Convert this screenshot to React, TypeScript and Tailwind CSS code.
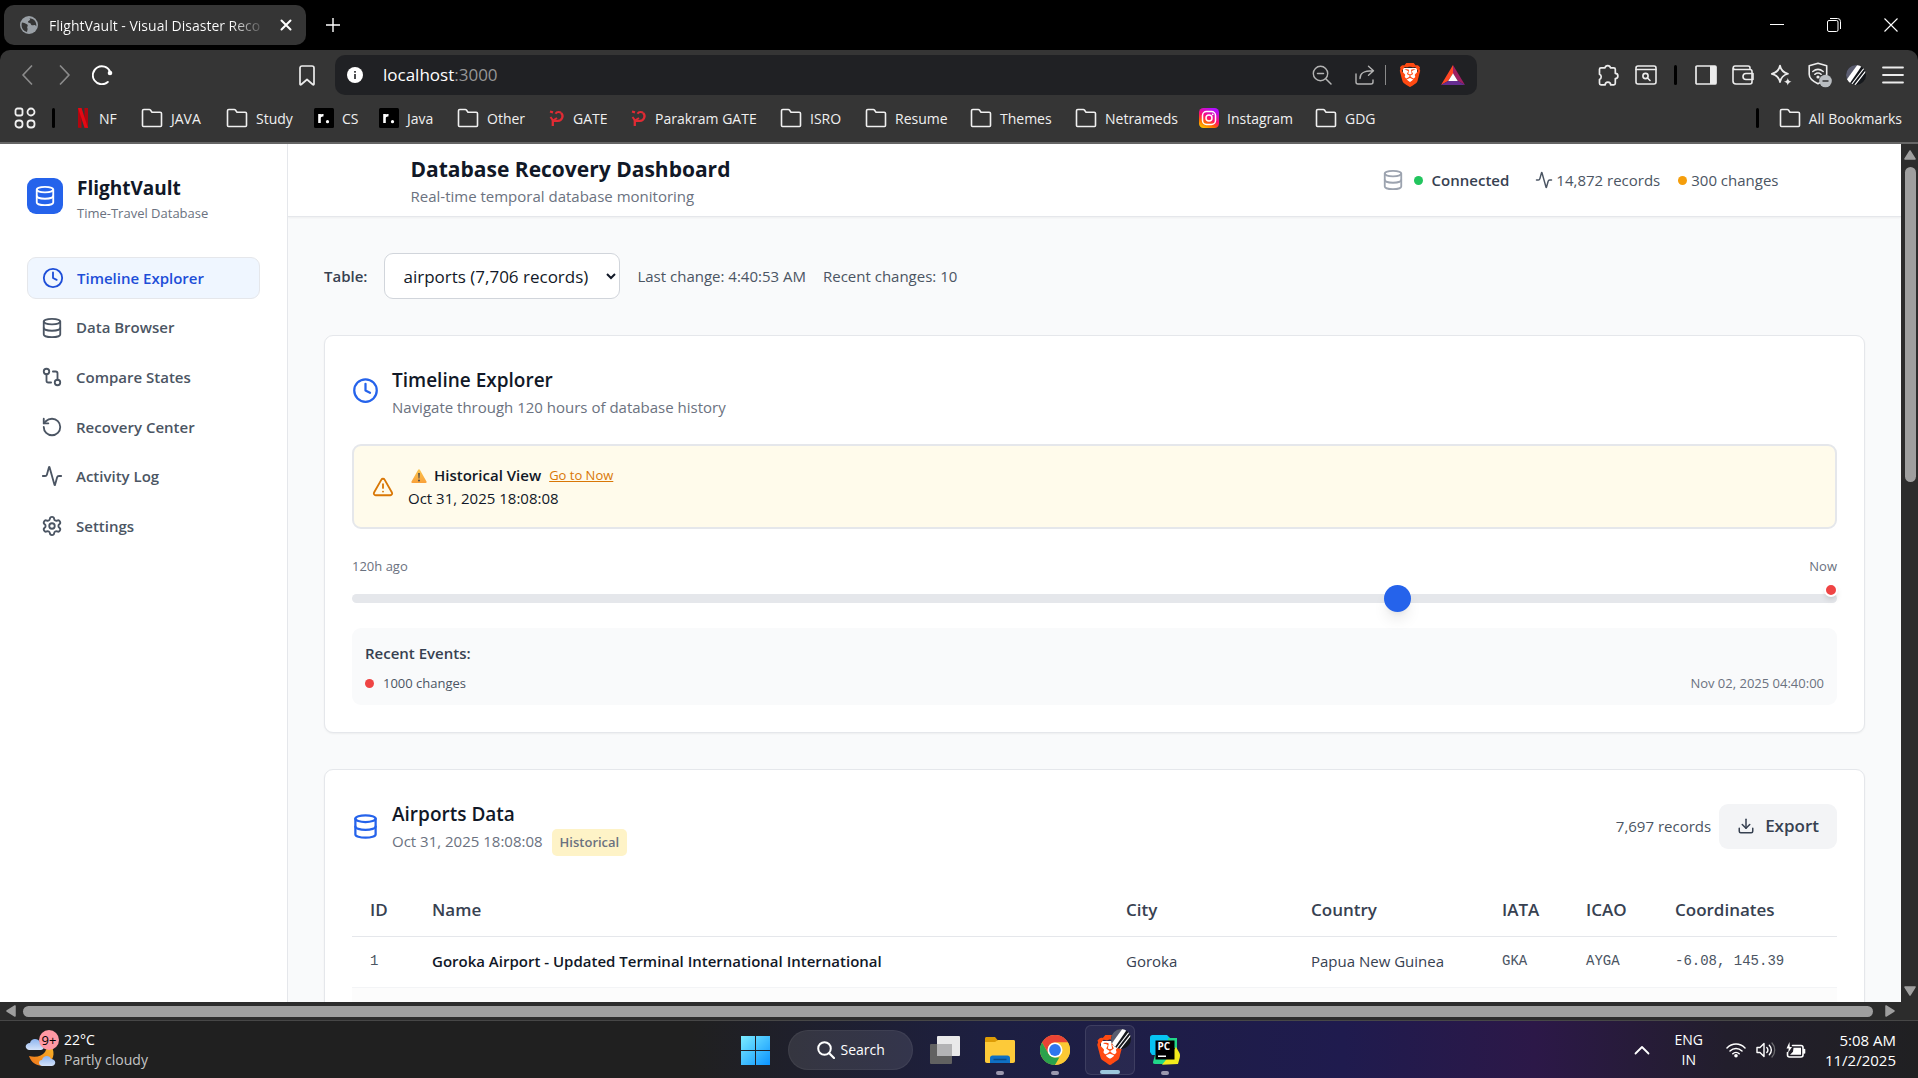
import React from "react";
import {
  Activity,
  Clock,
  Database,
  Download,
  GitCompare,
  RotateCcw,
  Settings,
  TriangleAlert,
} from "lucide-react";
import { SiBrave } from "react-icons/si";

type IconProps = { className?: string };

/* ---------- browser icons ---------- */

const line = {
  fill: "none",
  stroke: "currentColor",
  strokeLinecap: "round" as const,
  strokeLinejoin: "round" as const,
};

function GlobeIcon() {
  return (
    <svg viewBox="0 0 18 18" className="size-[18px] shrink-0">
      <circle cx="9" cy="9" r="9" fill="#9aa0a6" />
      <path
        d="M2 6.500c2 0 3 .8 4.400 1.400 1.400.5 1.700 1.600 1 2.600-.7 1 .3 1.500.2 2.700-.1 1-.6 1.800-.6 2.800C3.600 15.200 1.600 12.400 1.600 9c0-.9.1-1.700.4-2.500zM9 2.200c1 .2 1.400 1 .9 1.800-.6.9-2 .8-1.900 2 .1 1 1.600.7 2.300 1.300.8.6.6 1.900 1.700 2 1.200.2 1.600-.6 2.600-.3.9.3 1.300.9 1.700 1.200.5-3.800-1.800-7.900-7.300-8z"
        fill="#353535"
      />
    </svg>
  );
}

function FolderIcon() {
  return (
    <svg viewBox="0 0 22 20" className="h-5 w-[22px] shrink-0">
      <path
        d="M1.500 17.500V2.800C1.500 2 2 1.500 2.800 1.500h5.400c.5 0 .9.2 1.200.6L11 4.200h8.200c.8 0 1.300.5 1.300 1.300v12c0 .6-.4 1-1 1h-17c-.6 0-1-.4-1-1z"
        {...line}
        strokeWidth="1.600"
      />
    </svg>
  );
}

function NetflixIcon() {
  return (
    <svg viewBox="0 0 14 20" className="h-5 w-3.5 shrink-0">
      <path d="M1 0h3.500v20L1 19.800z" fill="#b1060f" />
      <path d="M7.500 0H11v20l-3.500-.2z" fill="#b1060f" />
      <path d="M1 0h3.500L11 20l-3.500-.3z" fill="#e50914" />
    </svg>
  );
}

function RDotIcon() {
  return (
    <svg viewBox="0 0 20 20" className="size-5 shrink-0">
      <rect width="20" height="20" rx="1.500" fill="#000" />
      <path d="M5.500 15V6M5.500 10c0-2 1.500-2.900 4-2.700" stroke="#fff" strokeWidth="2.600" fill="none" />
      <circle cx="13.500" cy="13.700" r="1.600" fill="#fff" />
    </svg>
  );
}

function PwIcon() {
  return (
    <svg viewBox="0 0 16 16" className="size-4 shrink-0">
      <path d="M1 1.500l3 .8M3.800 16v-5.200h5A4.600 4.600 0 0 0 12 2.800" stroke="#e02b34" strokeWidth="2.300" fill="none" />
      <path d="M1.500 7l2.500 3.500 4-2.500M6.500 3.800C7.500 2 9 1.500 12 2.500" stroke="#e02b34" strokeWidth="2" fill="none" />
    </svg>
  );
}

function InstagramIcon() {
  return (
    <svg viewBox="0 0 20 20" className="size-5 shrink-0">
      <defs>
        <linearGradient id="ig" x1="0.100" y1="1" x2="0.600" y2="0">
          <stop offset="0" stopColor="#ffd000" />
          <stop offset=".3" stopColor="#ff6a00" />
          <stop offset=".55" stopColor="#ff0f6f" />
          <stop offset="1" stopColor="#b30fff" />
        </linearGradient>
      </defs>
      <rect width="20" height="20" rx="4.500" fill="url(#ig)" />
      <rect x="3.500" y="3.500" width="13" height="13" rx="4" fill="none" stroke="#fff" strokeWidth="1.500" />
      <circle cx="10" cy="10" r="3" fill="none" stroke="#fff" strokeWidth="1.500" />
      <circle cx="13.700" cy="6.300" r=".9" fill="#fff" />
    </svg>
  );
}

function BraveIcon({ className }: IconProps) {
  return (
    <span className={"relative grid place-items-center " + (className ?? "")}>
      <span className="absolute inset-[20%] rounded-b-full bg-white" />
      <SiBrave className="relative size-full text-[#ff4a12]" />
    </span>
  );
}

function AvatarIcon({ className }: IconProps) {
  return (
    <svg viewBox="0 0 20 20" className={className}>
      <defs>
        <clipPath id="avatarClip">
          <circle cx="10" cy="10" r="10" />
        </clipPath>
      </defs>
      <g clipPath="url(#avatarClip)">
        <rect width="20" height="20" fill="#15181c" />
        <path d="M0 0h14L0 15z" fill="#5b5d70" />
        <path d="M-1 17L12-1h5L2 21z" fill="#fff" />
        <path d="M5.500 19.500L19 2M8.500 20.500L21 4.500" stroke="#fff" strokeWidth="1.200" />
      </g>
    </svg>
  );
}

/* ---------- browser chrome ---------- */

function TabStrip() {
  return (
    <div className="flex h-[50px] shrink-0 items-center justify-between bg-black">
      <div className="flex items-center">
        <div className="ml-1 flex h-10 w-[302px] items-center rounded-[10px] bg-[#353535] pr-2.5 pl-4 text-white">
          <GlobeIcon />
          <span className="ml-[11px] bg-[linear-gradient(to_right,white_86%,#5a5a5a)] bg-clip-text text-[14px] whitespace-nowrap text-transparent">
            FlightVault - Visual Disaster Reco
          </span>
          <button aria-label="Close tab" className="ml-auto grid size-5 place-items-center">
            <svg viewBox="0 0 12 12" className="size-3">
              <path d="M1.500 1.500l9 9M10.500 1.500l-9 9" {...line} strokeWidth="2" />
            </svg>
          </button>
        </div>
        <button aria-label="New tab" className="ml-5 text-white">
          <svg viewBox="0 0 14 14" className="size-3.5">
            <path d="M7 0v14M0 7h14" stroke="currentColor" strokeWidth="1.400" />
          </svg>
        </button>
      </div>
      <div className="flex items-center gap-[43px] pr-5 text-white">
        <button aria-label="Minimize">
          <svg viewBox="0 0 14 14" className="size-3.5">
            <path d="M0 6.500h14" stroke="currentColor" />
          </svg>
        </button>
        <button aria-label="Restore">
          <svg viewBox="0 0 14 14" className="size-3.5">
            <rect x=".5" y="2.500" width="10.500" height="11" rx="1.500" fill="none" stroke="currentColor" />
            <path d="M3 .5h7.500a3 3 0 0 1 3 3V11" fill="none" stroke="currentColor" />
          </svg>
        </button>
        <button aria-label="Close window">
          <svg viewBox="0 0 14 14" className="size-3.5">
            <path d="M.5.5l13 13M13.500.5l-13 13" stroke="currentColor" strokeWidth="1.100" />
          </svg>
        </button>
      </div>
    </div>
  );
}

function Toolbar() {
  return (
    <div className="flex h-[50px] shrink-0 items-center rounded-t-[10px] bg-[#353535] text-[#ececec]">
      <div className="flex w-[335px] items-center pl-5">
        <button aria-label="Back" className="text-[#8b8b8b]">
          <svg viewBox="0 0 14 20" className="h-5 w-3.5">
            <path d="M11.500 1L3 10l8.500 9" {...line} strokeWidth="1.700" />
          </svg>
        </button>
        <button aria-label="Forward" className="ml-6 text-[#8b8b8b]">
          <svg viewBox="0 0 14 20" className="h-5 w-3.5">
            <path d="M2.500 1L11 10l-8.500 9" {...line} strokeWidth="1.700" />
          </svg>
        </button>
        <button aria-label="Reload" className="ml-5 text-white">
          <svg viewBox="0 0 21 20" className="h-5 w-[21px]">
            <path d="M15.800 17A9 9 0 1 1 18 6.500" {...line} strokeWidth="1.900" />
            <circle cx="18" cy="8" r="2.300" fill="currentColor" />
          </svg>
        </button>
        <button aria-label="Bookmark this tab" className="mr-5 ml-auto">
          <svg viewBox="0 0 16 21" className="h-[21px] w-4">
            <path d="M1 19V3a2 2 0 0 1 2-2h10a2 2 0 0 1 2 2v16c0 .8-.6 1-1.200.5L8 14.500l-5.800 5C1.600 20 1 19.800 1 19z" {...line} strokeWidth="1.700" />
          </svg>
        </button>
      </div>
      <div className="flex h-10 w-[1142px] items-center rounded-[10px] bg-[#202124] pr-3 pl-3">
        <svg viewBox="0 0 16 16" className="size-4">
          <circle cx="8" cy="8" r="8" fill="#fff" />
          <rect x="7.200" y="7" width="1.600" height="5" fill="#202124" />
          <rect x="7.200" y="4" width="1.600" height="1.700" fill="#202124" />
        </svg>
        <span className="ml-5 text-[17px] leading-6 text-white">
          localhost<span className="text-[#969696]">:3000</span>
        </span>
        <button aria-label="Zoom" className="ml-auto text-[#b4b4b4]">
          <svg viewBox="0 0 20 20" className="size-5">
            <circle cx="8.500" cy="8.500" r="7.200" {...line} strokeWidth="1.400" />
            <path d="M14 14l5 5M5.500 8.500h6" {...line} strokeWidth="1.500" />
          </svg>
        </button>
        <button aria-label="Share" className="ml-[23px] text-[#b4b4b4]">
          <svg viewBox="0 0 20 20" className="size-5">
            <path d="M1 9v8a2 2 0 0 0 2 2h13a2 2 0 0 0 2-2v-2M5 13.500C5 8.500 8 5.700 17.500 5.700M13.500 1.200L18.500 5.700l-5 4.500" {...line} strokeWidth="1.400" />
          </svg>
        </button>
        <span className="ml-2.5 h-5 w-px bg-[#8a8a8a]" />
        <button aria-label="Brave Shields" className="ml-3">
          <BraveIcon className="size-6" />
        </button>
        <button aria-label="Brave Rewards" className="ml-[19px]">
          <svg viewBox="0 0 24 20" className="h-5 w-6">
            <path d="M12 0L0 20l7-4 5-7.500z" fill="#ff4724" />
            <path d="M12 0l12 20-7-4-5-7.500z" fill="#9e1f63" />
            <path d="M0 20h24l-7-4H7z" fill="#662d91" />
            <path d="M12 8.200L16.800 16H7.200z" fill="#fff" />
          </svg>
        </button>
      </div>
      <div className="ml-auto flex items-center pr-3.5">
        <button aria-label="Extensions">
          <svg viewBox="0 0 22 22" className="size-[22px]">
            <path
              d="M8 3.800a2.800 2.800 0 0 1 5.500 0h3.300c1 0 1.500.6 1.500 1.500v4a2.600 2.600 0 0 1 0 5.200v4.800c0 1-.6 1.500-1.500 1.500h-3.200a2.700 2.700 0 0 0-5.400 0H4c-1 0-1.500-.6-1.500-1.500v-3.800a2.900 2.900 0 0 0 0-5.300V5.300c0-1 .5-1.500 1.500-1.500z"
              {...line}
              strokeWidth="1.700"
            />
          </svg>
        </button>
        <button aria-label="Search tabs" className="ml-4">
          <svg viewBox="0 0 22 20" className="h-5 w-[22px]">
            <rect x="1" y="1" width="20" height="18" rx="2" {...line} strokeWidth="1.600" />
            <path d="M1 4.500h20M12.500 13l2.500 2.500" {...line} strokeWidth="1.600" />
            <circle cx="10.500" cy="11" r="2.600" {...line} strokeWidth="1.600" />
          </svg>
        </button>
        <span className="ml-[17px] h-5 w-[3px] rounded-full bg-black" />
        <button aria-label="Sidebar" className="ml-[18px]">
          <svg viewBox="0 0 22 20" className="h-5 w-[22px]">
            <rect x="1" y="1" width="20" height="18" rx="1" {...line} strokeWidth="1.700" />
            <rect x="15" y="1" width="6" height="18" fill="currentColor" />
          </svg>
        </button>
        <button aria-label="Wallet" className="ml-[15px]">
          <svg viewBox="0 0 22 20" className="h-5 w-[22px]">
            <path d="M1 3v13a3 3 0 0 0 3 3h14a2 2 0 0 0 2-2V6.500a2 2 0 0 0-2-2H3A1.700 1.700 0 0 1 3 1h13a2 2 0 0 1 2 2v1" {...line} strokeWidth="1.600" />
            <path d="M21 8.500h-7a3 3 0 0 0 0 6h7z" {...line} strokeWidth="1.600" />
          </svg>
        </button>
        <button aria-label="Leo AI" className="ml-4">
          <svg viewBox="0 0 22 22" className="size-[22px]">
            <path d="M10 1.500c.9 4.800 2.800 7 8 8.300-5.200 1.300-7.100 3.500-8 8.400-.9-4.900-2.900-7.100-8.200-8.400C7.100 8.500 9.100 6.300 10 1.500z" {...line} strokeWidth="1.700" />
            <path d="M17.800 14c.5 2.400 1.200 3.100 3.700 3.700-2.500.6-3.200 1.300-3.700 3.800-.5-2.500-1.300-3.200-3.800-3.800 2.500-.6 3.300-1.300 3.800-3.700z" fill="currentColor" />
          </svg>
        </button>
        <button aria-label="VPN" className="ml-4">
          <svg viewBox="0 0 24 26" className="h-[26px] w-6">
            <path d="M10 1.200l8.700 2.600v8.500c0 4.700-4 7.300-8.700 9.500-4.700-2.200-8.800-4.800-8.800-9.500V3.800z" {...line} strokeWidth="1.600" />
            <path d="M4.800 9.500c3.200-2.600 7.200-2.600 10.400 0M6.800 12.300c2-1.500 4.400-1.500 6.400 0" {...line} strokeWidth="1.500" />
            <circle cx="10" cy="15" r="1.600" fill="currentColor" />
            <circle cx="17.500" cy="19" r="6.300" fill="#b9bdc1" />
            <path d="M14.500 19h6" stroke="#353535" strokeWidth="1.500" />
          </svg>
        </button>
        <button aria-label="Profile" className="ml-3.5">
          <AvatarIcon className="size-5" />
        </button>
        <button aria-label="Menu" className="ml-4">
          <svg viewBox="0 0 22 20" className="h-5 w-[22px]">
            <path d="M1 2.500h20M1 10h20M1 17.500h20" {...line} strokeWidth="1.800" />
          </svg>
        </button>
      </div>
    </div>
  );
}

const BOOKMARKS: { label: string; kind: string; width: string }[] = [
  { label: "NF", kind: "netflix", width: "w-[64px]" },
  { label: "JAVA", kind: "folder", width: "w-[85px]" },
  { label: "Study", kind: "folder", width: "w-[88px]" },
  { label: "CS", kind: "rdot", width: "w-[65px]" },
  { label: "Java", kind: "rdot", width: "w-[78px]" },
  { label: "Other", kind: "folder", width: "w-[92px]" },
  { label: "GATE", kind: "pw", width: "w-[82px]" },
  { label: "Parakram GATE", kind: "pw", width: "w-[149px]" },
  { label: "ISRO", kind: "folder", width: "w-[85px]" },
  { label: "Resume", kind: "folder", width: "w-[105px]" },
  { label: "Themes", kind: "folder", width: "w-[105px]" },
  { label: "Netrameds", kind: "folder", width: "w-[124px]" },
  { label: "Instagram", kind: "instagram", width: "w-[116px]" },
  { label: "GDG", kind: "folder", width: "w-[85px]" },
];

function BookmarkIcon({ kind }: { kind: string }) {
  if (kind === "netflix") return <NetflixIcon />;
  if (kind === "rdot") return <RDotIcon />;
  if (kind === "pw") return <PwIcon />;
  if (kind === "instagram") return <InstagramIcon />;
  return <FolderIcon />;
}

function BookmarksBar() {
  return (
    <div className="flex h-11 shrink-0 items-center border-b-2 border-[#666] bg-[#353535] pb-1.5 pl-3.5 text-[14px] whitespace-nowrap text-[#f0f0f0]">
      <button aria-label="Apps">
        <svg viewBox="0 0 22 22" className="size-[22px]">
          <g {...line} strokeWidth="1.800">
            <rect x="1.500" y="1.500" width="7" height="7" rx="2" />
            <rect x="13.500" y="1.500" width="7" height="7" rx="3.500" />
            <rect x="1.500" y="13.500" width="7" height="7" rx="3" />
            <rect x="13.500" y="13.500" width="7" height="7" rx="3" />
          </g>
        </svg>
      </button>
      <span className="ml-4 h-5 w-[3px] rounded-full bg-black" />
      <nav aria-label="Bookmarks" className="ml-[22px] flex">
        {BOOKMARKS.map((b) => (
          <a key={b.label} href="#" className={"flex items-center gap-2 " + b.width}>
            <BookmarkIcon kind={b.kind} />
            {b.label}
          </a>
        ))}
      </nav>
      <div className="ml-auto flex items-center gap-2 pr-4">
        <span className="mr-3 h-5 w-[3px] rounded-full bg-black" />
        <FolderIcon />
        <a href="#">All Bookmarks</a>
      </div>
    </div>
  );
}

/* ---------- application ---------- */

const NAV = [
  { label: "Timeline Explorer", Icon: Clock },
  { label: "Data Browser", Icon: Database },
  { label: "Compare States", Icon: GitCompare },
  { label: "Recovery Center", Icon: RotateCcw },
  { label: "Activity Log", Icon: Activity },
  { label: "Settings", Icon: Settings },
];

function Sidebar() {
  return (
    <aside className="w-72 shrink-0 border-r border-[#e5e7eb] bg-white px-[27px] pt-[26px]">
      <div className="flex items-center gap-3.5">
        <div className="grid size-9 place-items-center rounded-[9px] bg-[#2563eb] text-white">
          <Database className="size-[22px]" strokeWidth={2} />
        </div>
        <div className="pt-0.5">
          <h1 className="text-[19px] leading-8 font-bold text-[#111827]">FlightVault</h1>
          <p className="text-[13px] leading-[18px] text-[#6b7280]">Time-Travel Database</p>
        </div>
      </div>
      <nav className="mt-[35px] flex h-[290px] flex-col justify-between">
        {NAV.map(({ label, Icon }, i) => (
          <a
            key={label}
            href="#"
            className={
              i === 0
                ? "flex h-[42px] items-center gap-[13px] rounded-[9px] border border-[#e5e7eb] bg-[#eff6ff] px-3.5 text-[15px] font-semibold text-[#1d4ed8]"
                : "flex h-[42px] items-center gap-[13px] rounded-[9px] px-3.5 text-[15px] font-semibold text-[#4b5563]"
            }
          >
            <Icon className="size-[22px]" />
            {label}
          </a>
        ))}
      </nav>
    </aside>
  );
}

function Header() {
  return (
    <header className="border-b border-[#e5e7eb] bg-white shadow-xs">
      <div className="mx-auto flex h-[72px] max-w-[1440px] items-center justify-between px-9">
        <div>
          <h2 className="text-[21px] leading-8 font-bold text-[#111827]">Database Recovery Dashboard</h2>
          <p className="text-[15px] leading-[22px] text-[#6b7280]">Real-time temporal database monitoring</p>
        </div>
        <div className="flex items-center text-[15px] text-[#4b5563]">
          <Database className="size-[22px] text-[#9ca3af]" />
          <span className="ml-2.5 size-[9px] rounded-full bg-[#22c55e]" />
          <span className="ml-[9px] font-semibold text-[#374151]">Connected</span>
          <Activity className="ml-[26px] size-[18px]" />
          <span className="ml-[3px]">14,872 records</span>
          <span className="ml-[18px] size-[9px] rounded-full bg-[#f59e0b]" />
          <span className="ml-1">300 changes</span>
        </div>
      </div>
    </header>
  );
}

function WarningGlyph() {
  return (
    <svg viewBox="0 0 16 14" className="mx-[3px] h-3.5 w-4">
      <defs>
        <linearGradient id="warn" x1="0" y1="0" x2="0" y2="1">
          <stop offset="0" stopColor="#fbc64f" />
          <stop offset="1" stopColor="#f9a13a" />
        </linearGradient>
      </defs>
      <path d="M8 .3c.5 0 .8.2 1 .6l6.500 11.700c.4.700 0 1.400-.8 1.400H1.300c-.8 0-1.200-.7-.8-1.400L7 .9c.2-.4.5-.6 1-.6z" fill="url(#warn)" />
      <path d="M7.200 4h1.600l-.3 5.500h-1z" fill="#4a4a4a" />
      <circle cx="8" cy="11.500" r="1" fill="#4a4a4a" />
    </svg>
  );
}

function TimelineCard() {
  return (
    <section className="rounded-[9px] border border-[#e5e7eb] bg-white p-[27px] shadow-xs">
      <div className="flex items-center gap-[13px]">
        <Clock className="size-[27px] text-[#2563eb]" />
        <div>
          <h3 className="text-[19px] leading-[34px] font-semibold text-[#111827]">Timeline Explorer</h3>
          <p className="text-[15px] leading-5 text-[#6b7280]">Navigate through 120 hours of database history</p>
        </div>
      </div>

      <div className="mt-[27px] flex items-center gap-3.5 rounded-[9px] border-2 border-[#e5e7eb] bg-[#fffbeb] py-[18px] pl-[18px]">
        <TriangleAlert className="size-[22px] text-[#d97706]" />
        <div className="text-[15px] text-[#111827]">
          <div className="flex h-[23px] items-center gap-1">
            <WarningGlyph />
            <span className="font-semibold">Historical View</span>
            <button className="ml-1 text-[13px] text-[#d97706] underline">Go to Now</button>
          </div>
          <p className="leading-[22px]">Oct 31, 2025 18:08:08</p>
        </div>
      </div>

      <div className="mt-7 flex justify-between text-[13px] leading-[18px] text-[#6b7280]">
        <span>120h ago</span>
        <span>Now</span>
      </div>
      <div className="relative mt-[9px] flex h-7 items-center">
        <input
          type="range"
          aria-label="Point in time"
          min={0}
          max={1000}
          defaultValue={708}
          className="h-[9px] w-full appearance-none rounded-full bg-[#e5e7eb] [&::-webkit-slider-thumb]:size-[27px] [&::-webkit-slider-thumb]:appearance-none [&::-webkit-slider-thumb]:rounded-full [&::-webkit-slider-thumb]:bg-[#2563eb] [&::-webkit-slider-thumb]:shadow-lg"
        />
        <span className="absolute -top-px -right-px size-3.5 rounded-full border-2 border-white bg-[#ef4444] shadow-md" />
      </div>

      <div className="mt-4 rounded-[9px] bg-[#f9fafb] px-[13px] pt-3.5 pb-3">
        <h4 className="text-[15px] leading-[22px] font-semibold text-[#374151]">Recent Events:</h4>
        <div className="mt-[9px] flex items-center justify-between text-[13px] leading-5">
          <span className="flex items-center gap-[9px] text-[#4b5563]">
            <span className="size-[9px] rounded-full bg-[#ef4444]" />
            1000 changes
          </span>
          <time className="text-[#6b7280]">Nov 02, 2025 04:40:00</time>
        </div>
      </div>
    </section>
  );
}

const COLUMNS = [
  { label: "ID", width: "w-[62px]" },
  { label: "Name", width: "" },
  { label: "City", width: "w-[185px]" },
  { label: "Country", width: "w-[191px]" },
  { label: "IATA", width: "w-[84px]" },
  { label: "ICAO", width: "w-[89px]" },
  { label: "Coordinates", width: "w-[180px]" },
];

function DataCard() {
  return (
    <section className="mt-9 rounded-[9px] border border-[#e5e7eb] bg-white p-[27px] shadow-xs">
      <div className="flex items-center justify-between">
        <div className="flex items-center gap-[13px]">
          <Database className="size-[27px] text-[#2563eb]" />
          <div>
            <h3 className="text-[19px] leading-[34px] font-semibold text-[#111827]">Airports Data</h3>
            <p className="flex h-6 items-start gap-[9px] text-[15px] leading-5 text-[#6b7280]">
              Oct 31, 2025 18:08:08
              <span className="-mt-0.5 rounded-[5px] bg-[#fef3c7] px-2 text-[13px] leading-[27px] font-semibold">Historical</span>
            </p>
          </div>
        </div>
        <div className="flex items-center gap-2">
          <span className="text-[15px] text-[#4b5563]">7,697 records</span>
          <button className="flex h-[45px] items-center gap-2.5 rounded-[9px] bg-[#f3f4f6] px-[18px] text-[17px] font-semibold text-[#374151]">
            <Download className="size-[18px]" />
            Export
          </button>
        </div>
      </div>
      <table className="mt-[27px] w-full table-fixed text-left">
        <thead>
          <tr className="h-[54px] border-b border-[#e5e7eb] text-[17px] text-[#374151]">
            {COLUMNS.map((c) => (
              <th key={c.label} scope="col" className={"px-[18px] pt-0.5 font-semibold " + c.width}>
                {c.label}
              </th>
            ))}
          </tr>
        </thead>
        <tbody>
          <tr className="h-[51px] border-b border-[#f3f4f6] text-[15px] text-[#374151]">
            <td className="px-[18px] font-['Liberation_Mono',monospace] text-[14px] text-[#4b5563]">1</td>
            <td className="px-[18px] font-semibold text-[#111827]">
              Goroka Airport - Updated Terminal International International
            </td>
            <td className="px-[18px]">Goroka</td>
            <td className="px-[18px]">Papua New Guinea</td>
            <td className="px-[18px] font-['Liberation_Mono',monospace] text-[14px] text-[#4b5563]">GKA</td>
            <td className="px-[18px] font-['Liberation_Mono',monospace] text-[14px] text-[#4b5563]">AYGA</td>
            <td className="px-[18px] font-['Liberation_Mono',monospace] text-[14px] text-[#4b5563]">-6.08, 145.39</td>
          </tr>
          <tr className="h-[51px] bg-[#fcfcfc]">
            <td colSpan={7} />
          </tr>
        </tbody>
      </table>
    </section>
  );
}

function Dashboard() {
  return (
    <main className="min-w-0 flex-1 overflow-hidden bg-[#f9fafb]">
      <Header />
      <div className="p-9">
        <div className="mb-9 flex items-center gap-[17px] text-[15px] text-[#4b5563]">
          <label htmlFor="table" className="font-semibold text-[#374151]">
            Table:
          </label>
          <select
            id="table"
            defaultValue="airports"
            className="h-[46px] w-[236px] rounded-[9px] border border-[#d1d5db] bg-white px-3.5 text-[17px] text-[#111827]"
          >
            <option value="airports">airports (7,706 records)</option>
          </select>
          <span>Last change: 4:40:53 AM</span>
          <span>Recent changes: 10</span>
        </div>
        <TimelineCard />
        <DataCard />
      </div>
    </main>
  );
}

function VerticalScrollbar() {
  return (
    <div className="flex w-[17px] shrink-0 flex-col items-center bg-[#2c2c2c] py-1.5 pl-px">
      <svg viewBox="0 0 12 10" className="h-2.5 w-3 shrink-0">
        <path d="M6 1l5 8H1z" fill="#9f9f9f" stroke="#9f9f9f" strokeWidth="1.500" strokeLinejoin="round" />
      </svg>
      <div className="mt-[7px] mb-auto h-[315px] w-[11px] rounded-full bg-[#9f9f9f]" />
      <svg viewBox="0 0 12 10" className="h-2.5 w-3 shrink-0">
        <path d="M6 9l5-8H1z" fill="#9f9f9f" stroke="#9f9f9f" strokeWidth="1.500" strokeLinejoin="round" />
      </svg>
    </div>
  );
}

function HorizontalScrollbar() {
  return (
    <div className="flex h-[18px] shrink-0 items-center bg-[#2c2c2c] pr-[23px] pl-1.5">
      <svg viewBox="0 0 10 12" className="h-3 w-2.5 shrink-0">
        <path d="M1 6l8-5v10z" fill="#9f9f9f" stroke="#9f9f9f" strokeWidth="1.500" strokeLinejoin="round" />
      </svg>
      <div className="mr-3 ml-[7px] h-[11px] flex-1 rounded-full bg-[#9f9f9f]" />
      <svg viewBox="0 0 10 12" className="h-3 w-2.5 shrink-0">
        <path d="M9 6L1 1v10z" fill="#9f9f9f" stroke="#9f9f9f" strokeWidth="1.500" strokeLinejoin="round" />
      </svg>
    </div>
  );
}

/* ---------- taskbar ---------- */

function WeatherIcon() {
  return (
    <svg viewBox="0 0 36 36" className="h-9 w-9 shrink-0">
      <defs>
        <linearGradient id="cloud" x1="0" y1="0" x2="0" y2="1">
          <stop offset="0" stopColor="#8fb6f0" />
          <stop offset="1" stopColor="#d5e3fa" />
        </linearGradient>
        <linearGradient id="moon" x1="1" y1="0" x2="0" y2="1">
          <stop offset="0" stopColor="#f8b928" />
          <stop offset="1" stopColor="#f0731a" />
        </linearGradient>
      </defs>
      <path d="M25 12c5 6 5 15-2 20-7 4-16 1-19-8 7 2 13 0 16-4 1-3 3-5 5-8z" fill="url(#moon)" />
      <path d="M4 18c-5-1-4-7 1-7 1-5 8-5 10-1 5 0 6 7 1 8z" fill="url(#cloud)" />
      <path d="M17 34c-4-1-4-6 0-6 1-5 8-5 9-1 5 0 6 6 1 7z" fill="url(#cloud)" />
    </svg>
  );
}

function ChromeIcon() {
  return (
    <svg viewBox="0 0 30 30" className="size-[30px]">
      <circle cx="15" cy="15" r="15" fill="#fcc934" />
      <path d="M2 7.500A15 15 0 0 1 28 7.500H15a7.500 7.500 0 0 0-6.500 3.750L8 18z" fill="#ea4335" />
      <path d="M2 7.500l6.500 11.250A7.500 7.500 0 0 0 15 22.500h6.500L15 30A15 15 0 0 1 2 7.500z" fill="#2ba24c" />
      <path d="M28 7.500A15 15 0 0 1 15 30l6.500-11.250A7.500 7.500 0 0 0 15 7.500z" fill="#fcc934" />
      <circle cx="15" cy="15" r="7.500" fill="#fff" />
      <circle cx="15" cy="15" r="5.900" fill="#2f76ee" />
    </svg>
  );
}

function TaskButton({ label, open, children }: { label: string; open?: boolean; children: React.ReactNode }) {
  return (
    <button aria-label={label} className="relative grid h-[50px] w-[30px] place-items-center">
      {children}
      {open && <span className="absolute bottom-0 left-[11px] h-1 w-2 rounded-full bg-[#9b98ae]" />}
    </button>
  );
}

function Taskbar() {
  return (
    <footer className="grid h-[58px] shrink-0 grid-cols-[1fr_auto_1fr] items-center border-t border-[#474747] bg-[linear-gradient(to_right,#202020_36%,#1d1f42_52%,#1f1b4e_70%,#2c1848_80%,#221e2c_90%,#202022)] text-[14px] leading-5 text-white">
      <div className="flex items-center pl-[25px]">
        <div className="relative">
          <WeatherIcon />
          <span className="absolute -top-0.5 left-3.5 grid size-5 place-items-center rounded-full bg-[#ff99a4] text-[13px] text-black">9+</span>
        </div>
        <div className="ml-[3px]">
          <p>22°C</p>
          <p className="text-[#c4c4c4]">Partly cloudy</p>
        </div>
      </div>

      <div className="flex items-center pt-px pl-0.5">
        <TaskButton label="Start">
          <svg viewBox="0 0 29 29" className="size-[29px]">
            <defs>
              <linearGradient id="win" x1="0" y1="0" x2="1" y2="1">
                <stop offset="0" stopColor="#7cecff" />
                <stop offset="1" stopColor="#0a93ff" />
              </linearGradient>
            </defs>
            <path d="M0 0h14v14H0zM15 0h14v14H15zM0 15h14v14H0zM15 15h14v14H15z" fill="url(#win)" />
          </svg>
        </TaskButton>
        <button className="ml-[17px] flex h-10 w-[125px] items-center gap-1.5 rounded-full border border-white/5 bg-white/10 pl-7 text-[14px]">
          <svg viewBox="0 0 18 18" className="size-[18px]">
            <circle cx="7.500" cy="7.500" r="6.300" {...line} strokeWidth="2" />
            <path d="M12.500 12.500l4.500 4.500" {...line} strokeWidth="2.200" />
          </svg>
          Search
        </button>
        <div className="ml-[17px] flex gap-[25px]">
          <TaskButton label="Task view">
            <svg viewBox="0 0 30 28" className="h-7 w-[30px]">
              <rect y="8" width="22" height="20" rx="1" fill="#616161" />
              <rect x="7" width="23" height="20" rx="1" fill="#e9e9ea" />
              <rect x="7" y="8" width="15" height="12" fill="#b3b3b5" />
            </svg>
          </TaskButton>
          <TaskButton label="File Explorer" open>
            <svg viewBox="0 0 30 28" className="h-7 w-[30px]">
              <path d="M0 2.500C0 1.500.7 1 1.500 1H10l3 3.500V8H0z" fill="#dd9c06" />
              <path d="M0 6h10l3-2h15.500c1 0 1.500.6 1.500 1.500V25c0 1.300-.7 2-2 2H2c-1.300 0-2-.7-2-2z" fill="#fdca39" />
              <path d="M5 27v-5c0-1.500 1-2.500 2.500-2.500h15c1.500 0 2.500 1 2.500 2.500v5z" fill="#0f70c4" />
              <path d="M8.500 23.500h13" stroke="#0a4a86" strokeWidth="1.500" />
            </svg>
          </TaskButton>
          <TaskButton label="Chrome" open>
            <ChromeIcon />
          </TaskButton>
          <button
            aria-label="Brave"
            className="relative -mx-2.5 grid h-[50px] w-[50px] place-items-center rounded-md border border-white/10 bg-white/5"
          >
            <BraveIcon className="size-[30px]" />
            <AvatarIcon className="absolute top-[3px] right-[3px] size-5" />
            <span className="absolute bottom-0 left-3.5 h-1 w-5 rounded-full bg-[#9cc7dc]" />
          </button>
          <TaskButton label="PyCharm" open>
            <svg viewBox="0 0 30 30" className="size-[30px]">
              <path d="M0 2.500C0 1 1 0 2.500 0H17l3 3v12L8 20H2l-2-3z" fill="#07c3f2" />
              <path d="M18 3h9v11l-9-3zM5 20h12v9H5c-2 0-2-1-2-2z" fill="#21d789" />
              <path d="M26 12l3.500 6c.7 1.500.5 3 .3 4.500L28 29l-16 .8L20 20z" fill="#f3ea1c" />
              <rect x="5.500" y="5.500" width="19" height="19" fill="#000" />
              <rect x="8" y="20.500" width="8" height="1.500" fill="#fff" />
              <text x="7.500" y="15" fill="#fff" fontFamily="Open Sans, sans-serif" fontSize="10" fontWeight="700">
                PC
              </text>
            </svg>
          </TaskButton>
        </div>
      </div>

      <div className="flex items-center justify-end pr-[22px]">
        <button aria-label="Show hidden icons">
          <svg viewBox="0 0 16 10" className="h-2.5 w-4">
            <path d="M1.500 8.500L8 2l6.500 6.500" {...line} strokeWidth="1.800" />
          </svg>
        </button>
        <div className="ml-6 text-center">
          <p>ENG</p>
          <p>IN</p>
        </div>
        <svg viewBox="0 0 20 16" className="ml-[23px] h-4 w-5">
          <path d="M1 6c5.200-5.200 12.800-5.200 18 0M4 9c3.500-3.500 8.500-3.500 12 0M6.800 11.800c1.800-1.800 4.600-1.800 6.400 0" {...line} strokeWidth="1.500" />
          <circle cx="10" cy="13.700" r="1.800" fill="currentColor" />
        </svg>
        <svg viewBox="0 0 20 16" className="ml-2.5 h-4 w-5">
          <path d="M1 5.500h3l4-4v13l-4-4H1zM10.800 5.500c1.500 1.400 1.500 3.600 0 5M13.300 3.200c2.700 2.700 2.700 6.900 0 9.600" {...line} strokeWidth="1.400" />
          <path d="M16 1c3.600 4 3.600 10 0 14" {...line} stroke="#6c6c70" strokeWidth="1.300" />
        </svg>
        <svg viewBox="0 0 20 16" className="ml-2.5 h-4 w-5">
          <path d="M6.500 3.500H15a2 2 0 0 1 2 2V13a2 2 0 0 1-2 2H3.500a2 2 0 0 1-2-2v-2.500M18.500 7.500v3.500" {...line} strokeWidth="1.600" />
          <path d="M7.500 5.800H15v7H4l3-3z" fill="currentColor" />
          <path d="M3.500 0L.5 6.500h2.300L2 11l4-6H3.700z" fill="currentColor" />
        </svg>
        <div className="ml-[19px] text-right text-[15px]">
          <p>5:08 AM</p>
          <p>11/2/2025</p>
        </div>
      </div>
    </footer>
  );
}

export default function App() {
  return (
    <div className="flex h-screen flex-col overflow-hidden bg-black font-['Open_Sans',sans-serif]">
      <TabStrip />
      <Toolbar />
      <BookmarksBar />
      <div className="flex min-h-0 flex-1 overflow-hidden">
        <Sidebar />
        <Dashboard />
        <VerticalScrollbar />
      </div>
      <HorizontalScrollbar />
      <Taskbar />
    </div>
  );
}
